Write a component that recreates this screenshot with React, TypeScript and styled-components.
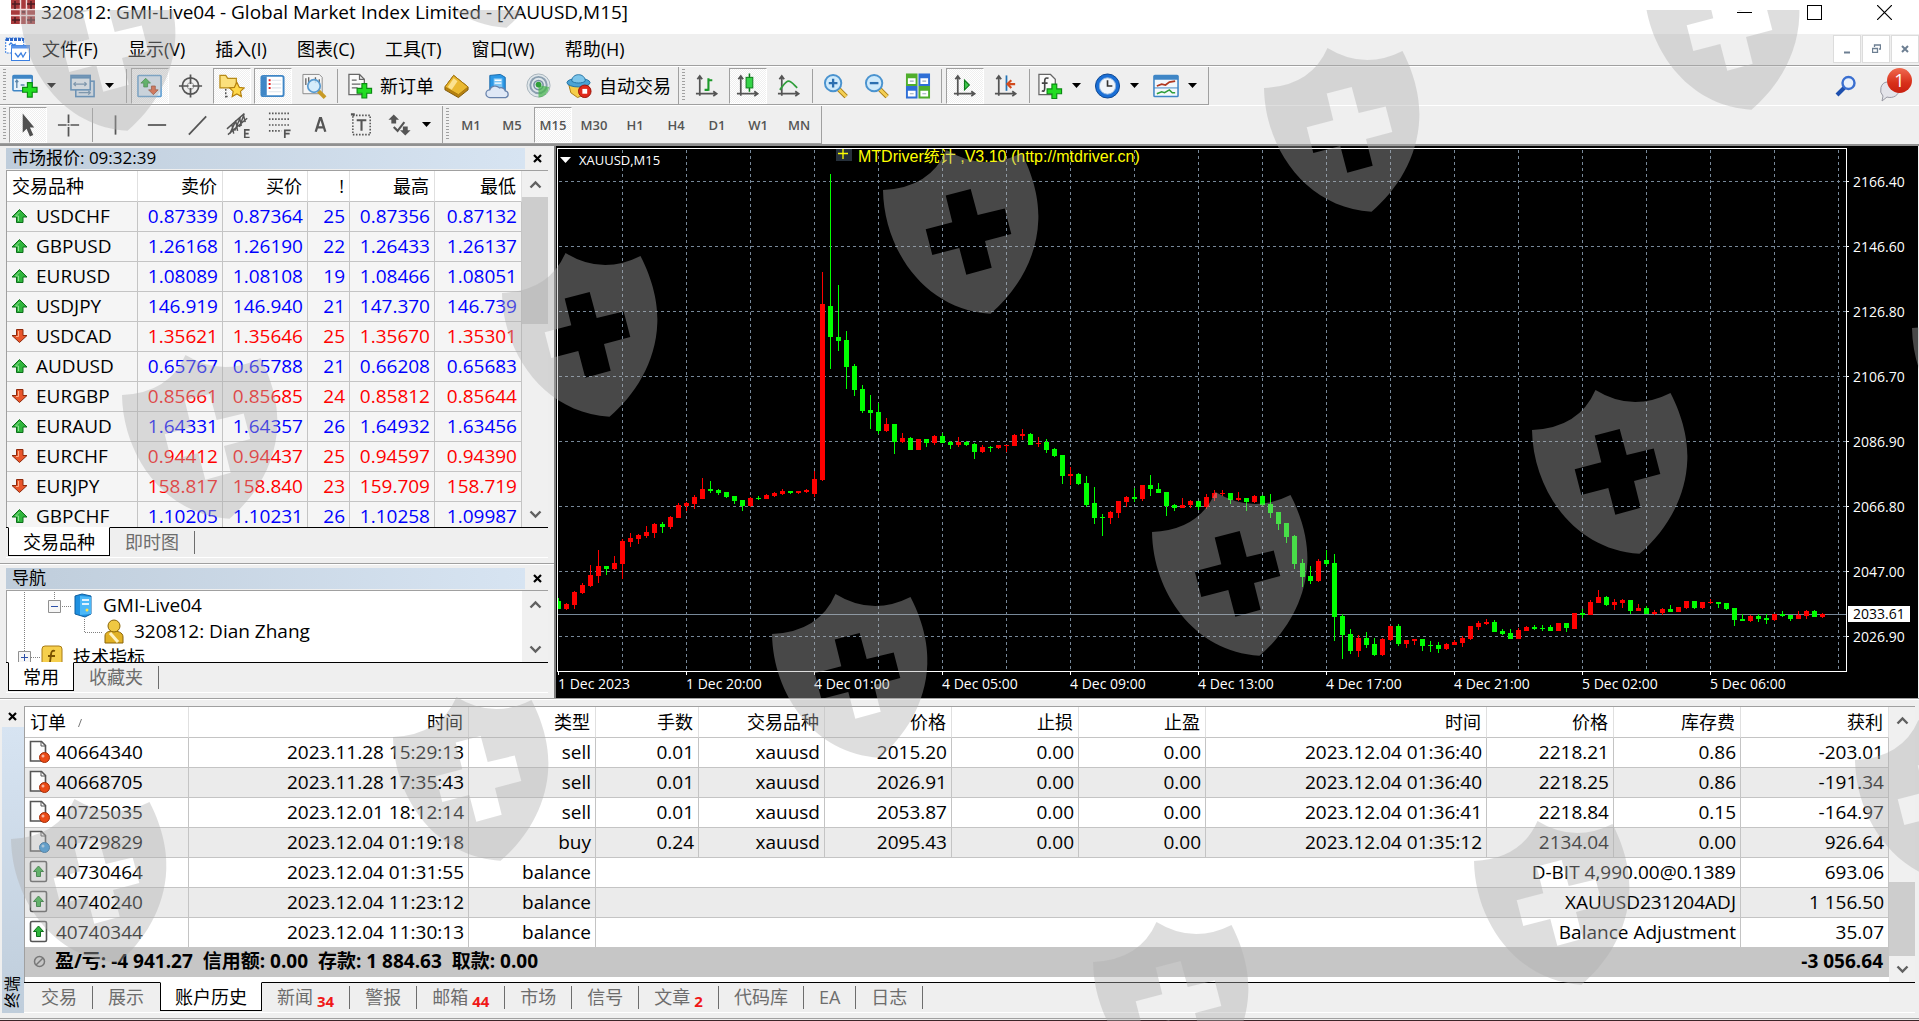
import React from 'react';
import styled, { createGlobalStyle, css } from 'styled-components';

const GlobalStyle = createGlobalStyle`
  *, *::before, *::after { box-sizing: border-box; }
  body { margin: 0; background: #efefef; }
  button { font: inherit; color: inherit; border: 0; background: none; padding: 0; margin: 0; }
  svg { display: block; flex: none; }
`;

const SANS = `"Open Sans", "Noto Sans CJK SC", sans-serif`;

const App_ = styled.div`
  position: relative;
  display: flex;
  flex-direction: column;
  min-height: 100vh;
  overflow: hidden;
  background: #efefef;
  color: #000;
  font-family: ${SANS};
  font-size: 18px;
`;

/* ---------- title and menu ---------- */

const TitleBar = styled.header`
  display: flex;
  align-items: center;
  height: 34px;
  padding: 0 0 10px 11px;
  gap: 6px;
  background: #fff;
  line-height: 24px;
`;
const TitleText = styled.h1`
  flex: 1;
  margin: 0;
  font-size: 19px;
  font-weight: 400;
  white-space: nowrap;
`;
const WindowButton = styled.button`
  display: flex;
  align-items: center;
  justify-content: center;
  width: 70px;
  height: 24px;
`;
const WindowButtons = styled.div`
  display: flex;
`;
const MenuBar = styled.nav`
  display: flex;
  align-items: center;
  height: 32px;
  padding: 0 0 2px 5px;
  border-bottom: 1px solid #a0a0a0;
`;
const MenuItems = styled.div`
  display: flex;
  flex: 1;
  margin-left: -2px;
`;
const MenuItem = styled.button`
  padding: 0 16px 0 14px;
  line-height: 28px;
  white-space: nowrap;
`;
const MdiButton = styled.button`
  display: flex;
  align-items: center;
  justify-content: center;
  width: 28px;
  height: 28px;
  margin-left: 1px;
  background: #fff;
  border: 1px solid #dcdcdc;
`;

/* ---------- tool bars ---------- */

const ToolRow = styled.div`
  display: flex;
  height: 39px;
  border-top: 1px solid #fff;
`;
const ToolGroup = styled.div<{ $end?: number }>`
  display: flex;
  align-items: center;
  gap: 3px;
  padding: 0 ${(p) => p.$end ?? 3}px 0 3px;
  border-right: 1px solid #a0a0a0;
  border-bottom: 1px solid #a0a0a0;
`;
const Grip = styled.span`
  width: 3px;
  height: 33px;
  background: repeating-linear-gradient(#a0a0a0 0 1px, transparent 1px 3px);
`;
const Divider = styled.span`
  width: 1px;
  height: 34px;
  margin: 0 1px;
  background: #a0a0a0;
`;
const ToolButton = styled.button<{ $on?: boolean; $drop?: boolean }>`
  display: flex;
  align-items: center;
  justify-content: ${(p) => (p.$drop ? 'flex-start' : 'center')};
  flex: none;
  gap: 9px;
  width: ${(p) => (p.$drop ? 55 : 38)}px;
  height: 36px;
  padding-left: ${(p) => (p.$drop ? 2 : 0)}px;
  border: 1px solid transparent;
  ${(p) =>
    p.$on &&
    css`
      background: repeating-conic-gradient(#fff 0 25%, #efefef 0 50%) 0 0 / 2px 2px;
      border-color: #a0a0a0 #fff #fff #a0a0a0;
    `}
`;
const WideTool = styled.button`
  display: flex;
  align-items: center;
  gap: 7px;
  padding: 0 1px 0 5px;
  white-space: nowrap;
  line-height: 30px;
`;
const PeriodButton = styled(ToolButton)`
  color: #555;
  font-size: 13px;
  font-weight: 600;
`;
const Spacer = styled.div`
  flex: 1;
`;
const RightTools = styled.div`
  display: flex;
  align-items: center;
  gap: 20px;
  padding-right: 6px;
`;
const AlertButton = styled.button`
  position: relative;
  width: 36px;
  height: 36px;
`;
const AlertCount = styled.span`
  position: absolute;
  right: 1px;
  top: 0;
  width: 25px;
  height: 25px;
  border-radius: 50%;
  background: linear-gradient(#ef6a50, #d8301a 60%, #c82010);
  color: #fff;
  font-size: 18px;
  line-height: 24px;
  text-align: center;
`;

/* ---------- docked panels ---------- */

const Main = styled.main`
  display: flex;
  flex: 1;
  min-height: 552px;
  border-top: 2px solid #909090;
`;
const Dock = styled.aside`
  display: flex;
  flex-direction: column;
  flex: none;
  width: 554px;
  padding: 0 6px 5px;
`;
const Panel = styled.section<{ $grow?: boolean }>`
  display: flex;
  flex-direction: column;
  flex: ${(p) => (p.$grow ? '1 1 0' : 'none')};
  min-height: 0;
  padding-top: 2px;
`;
const DockRule = styled.div`
  height: 3px;
  margin: 5px -6px 0;
  border-top: 1px solid #a0a0a0;
  box-shadow: inset 0 1px 0 #fff;
`;
const PanelHead = styled.header`
  display: flex;
  align-items: center;
  flex: none;
  height: 21px;
  margin-bottom: 1px;
`;
const PanelTitle = styled.h2`
  flex: 1;
  height: 21px;
  margin: 0;
  padding-left: 6px;
  background: linear-gradient(90deg, #bfcddb, #d7e4f2);
  font-size: 17px;
  font-weight: 400;
  line-height: 19px;
`;
const CloseButton = styled.button`
  display: flex;
  align-items: center;
  justify-content: center;
  width: 23px;
  height: 21px;
  padding-left: 2px;
`;
const PanelBody = styled.div<{ $h?: number }>`
  display: flex;
  position: relative;
  flex: ${(p) => (p.$h ? 'none' : '1 1 0')};
  height: ${(p) => (p.$h ? p.$h + 'px' : 'auto')};
  min-height: 0;
  overflow: hidden;
  border-top: 1px solid #a0a0a0;
  border-left: 1px solid #a0a0a0;
  background: #fff;
`;
const ScrollBar = styled.div<{ $w: number }>`
  display: flex;
  flex-direction: column;
  align-items: center;
  flex: none;
  width: ${(p) => p.$w}px;
  background: #f0f0f0;
`;
const ScrollStep = styled.button`
  display: flex;
  align-items: center;
  justify-content: center;
  width: 100%;
  height: 26px;
`;
const Thumb = styled.div<{ $h: number }>`
  width: 100%;
  height: ${(p) => p.$h}px;
  background: #cdcdcd;
`;
const Tabs = styled.div`
  display: flex;
  flex: none;
  height: 31px;
  padding-left: 2px;
  border-top: 1px solid #000;
  border-bottom: 1px solid #fff;
`;
const Tab = styled.button<{ $active?: boolean; $bare?: boolean }>`
  position: relative;
  display: flex;
  align-items: center;
  padding: 0 16px 0 15px;
  height: 28px;
  color: #6d6d6d;
  font-size: 18px;
  line-height: 26px;
  white-space: nowrap;
  ${(p) =>
    p.$active
      ? css`
          color: #000;
          background: #fff;
          height: 29px;
          margin-top: -1px;
          padding: 0 14px;
          border: 1px solid #000;
          border-top-color: #fff;
        `
      : css`
          &::after {
            content: '';
            display: ${p.$bare ? 'none' : 'block'};
            position: absolute;
            right: 0;
            top: 3px;
            height: 23px;
            border-right: 1px solid #6d6d6d;
          }
        `}
`;
const TabCount = styled.b`
  align-self: flex-end;
  padding-left: 4px;
  color: #f01818;
  font-size: 15px;
  line-height: 20px;
`;

/* ---------- tables ---------- */

const Table = styled.table`
  flex: 1;
  align-self: flex-start;
  min-width: 0;
  border-collapse: separate;
  border-spacing: 0;
  table-layout: fixed;
  white-space: nowrap;
`;
const Th = styled.th<{ $left?: boolean }>`
  height: 31px;
  padding: 0 5px;
  text-align: ${(p) => (p.$left ? 'left' : 'right')};
  font-size: 18px;
  font-weight: 400;
  line-height: 28px;
  border-right: 1px solid #e0e0e0;
  border-bottom: 1px solid #c4c4c4;
`;
const Td = styled.td<{ $left?: boolean }>`
  height: 30px;
  padding: 0 4px 2px;
  text-align: ${(p) => (p.$left ? 'left' : 'right')};
  font-size: 19px;
  line-height: 26px;
  border-right: 1px solid #c4c4c4;
  border-bottom: 1px solid #c4c4c4;
`;
const QuoteRow = styled.tr<{ $up: boolean }>`
  background: #f5f5f5;
  color: ${(p) => (p.$up ? '#0000ff' : '#ff0000')};
`;
const OrderRow = styled.tr`
  background: #fff;
  &:nth-child(even) { background: #ebebeb; }
  &:last-child td { border-bottom: 0; height: 29px; }
`;
const Label = styled.span<{ $gap: number }>`
  display: flex;
  align-items: center;
  gap: ${(p) => p.$gap}px;
  color: #000;
`;

/* ---------- navigator ---------- */

const Tree = styled.ul`
  flex: 1;
  margin: 0;
  padding: 1px 0 0;
  list-style: none;
  position: relative;
`;
const TreeItem = styled.li<{ $indent: number }>`
  display: flex;
  align-items: center;
  gap: 10px;
  height: 26px;
  padding-left: ${(p) => p.$indent}px;
  font-size: 19px;
  line-height: 24px;
  white-space: nowrap;
`;
const TreeFolder = styled(TreeItem)`
  font-size: 18px;
`;
const TreeLines = styled.svg`
  position: absolute;
  left: 0;
  top: 0;
`;

/* ---------- chart ---------- */

const Chart = styled.section`
  display: grid;
  grid-template-columns: 1fr 71px;
  grid-template-rows: 1fr 26px;
  flex: 1;
  min-width: 0;
  margin-right: 1px;
  padding: 2px 0 0 1px;
  border-left: 2px solid #808080;
  background: #000;
  color: #fff;
  font-size: 14px;
`;
const Plot = styled.div`
  position: relative;
  min-width: 0;
  overflow: hidden;
  border: 1px solid #fff;
`;
const PlotSvg = styled.svg`
  position: absolute;
  inset: 0;
  width: 100%;
  height: 100%;
`;
const PriceScale = styled.div`
  position: relative;
  display: flex;
  flex-direction: column;
  padding-top: 1px;
`;
const Price = styled.span`
  display: flex;
  align-items: center;
  gap: 4px;
  height: 65px;
  &::before {
    content: '';
    width: 2px;
    height: 1px;
    background: #fff;
  }
`;
const PriceTag = styled.span`
  position: absolute;
  left: 1px;
  top: 458px;
  width: 62px;
  height: 16px;
  padding-left: 5px;
  background: #fff;
  color: #000;
  line-height: 16px;
`;
const TimeScale = styled.div`
  display: flex;
  overflow: hidden;
  padding-left: 1px;
`;
const Time = styled.span`
  flex: none;
  width: 128px;
  line-height: 18px;
  white-space: nowrap;
  &::before {
    content: '';
    display: block;
    width: 1px;
    height: 3px;
    background: #fff;
  }
`;
const Symbol = styled.div`
  position: absolute;
  left: 2px;
  top: 1px;
  display: flex;
  align-items: center;
  gap: 8px;
  font-size: 13px;
  line-height: 20px;
`;
const Comment = styled.div`
  position: absolute;
  left: 278px;
  top: 0;
  display: flex;
  gap: 6px;
  color: #ffff00;
  font-family: "Liberation Sans", "Noto Sans CJK SC", sans-serif;
  font-size: 16px;
  line-height: 16px;
  white-space: nowrap;
`;

/* ---------- terminal ---------- */

const Terminal = styled.section`
  display: flex;
  padding: 7px 4px 0 2px;
  border-top: 1px solid #a0a0a0;
  box-shadow: inset 0 1px 0 #fff;
`;
const TerminalRail = styled.div`
  display: flex;
  flex-direction: column;
  flex: none;
  width: 22px;
`;
const RailTitle = styled.h2`
  flex: 1;
  margin: 0;
  padding-top: 5px;
  background: linear-gradient(#bfcddb, #d7e4f2);
  font-size: 16px;
  font-weight: 400;
  line-height: 20px;
  writing-mode: vertical-rl;
  text-orientation: sideways;
  transform: rotate(180deg);
`;
const RailClose = styled(CloseButton)`
  width: 20px;
  padding-left: 0;
`;
const TerminalBody = styled.div`
  display: flex;
  flex-direction: column;
  flex: 1;
  min-width: 0;
`;
const History = styled.div`
  display: flex;
  background: #fff;
  border-top: 1px solid #a0a0a0;
  border-left: 1px solid #a0a0a0;
`;
const HistoryMain = styled.div`
  display: flex;
  flex-direction: column;
  flex: 1;
  min-width: 0;
  padding-bottom: 5px;
`;
const HistoryTable = styled(Table)`
  width: 100%;
`;
const Summary = styled.div`
  display: flex;
  align-items: center;
  height: 30px;
  padding: 0 6px 2px 8px;
  gap: 9px;
  background: #c6c6c6;
  font-size: 19px;
  font-weight: 700;
  line-height: 28px;
  white-space: pre;
`;
const BottomEdge = styled.footer`
  height: 8px;
  border-bottom: 1px solid #3a2428;
  box-shadow: inset 0 -1px 0 #efefef, inset 0 -2px 0 #a0a0a0;
`;

const Watermarks = styled.svg`
  position: absolute;
  left: 0;
  top: 10px;
  width: 100%;
  height: calc(100% - 10px);
  pointer-events: none;
`;

/* ---------- icons ---------- */

const Drop = () => (
  <svg width="9" height="6" viewBox="0 0 9 6"><path d="M0 0h9L4.500 5z" fill="#000" /></svg>
);
const CloseMark = () => (
  <svg width="9" height="9" viewBox="0 0 9 9"><path d="M1 1l7 7M8 1L1 8" stroke="#000" strokeWidth="2.200" /></svg>
);
const Chevron = ({ down }: { down?: boolean }) => (
  <svg width="13" height="9" viewBox="0 0 13 9">
    <path d={down ? 'M1.500 1.500l5 5 5-5' : 'M1.500 7.500l5-5 5 5'} stroke="#606060" strokeWidth="2.400" fill="none" />
  </svg>
);
const TrendArrow = ({ up, size = 17 }: { up: boolean; size?: number }) => (
  <svg width={size} height={size} viewBox="0 0 17 17">
    <path
      d={up ? 'M8.500 2.500L16 10H12V15.500H5.500V10H1z' : 'M8.500 15.500L16 8.500H12V2.500H5.500V8.500H1z'}
      fill={up ? '#2fb53c' : '#e8552a'}
      stroke={up ? '#0d6e1a' : '#8e2a0c'}
      strokeLinejoin="round"
    />
    <path d={up ? 'M8.500 5L4.500 9H7.500V14' : 'M7.500 4V9.500H5'} stroke={up ? '#8be08f' : '#ffb08c'} fill="none" />
  </svg>
);
const Plus = ({ x, y }: { x: number; y: number }) => (
  <path
    transform={`translate(${x} ${y})`}
    d="M5 0h5v5h5v5h-5v5h-5v-5h-5v-5h5z"
    fill="#22dd22"
    stroke="#0a8a12"
    strokeWidth="1.200"
  />
);
const Axes = () => (
  <path d="M6 3v20M2 21h21M3.500 6L6 2.500 8.500 6M20 18.500l3.500 2.500-3.500 2.500" stroke="#555" strokeWidth="1.800" fill="none" />
);
const Lens = ({ minus }: { minus?: boolean }) => (
  <>
    <path d="M16 16l8 8" stroke="#a87b14" strokeWidth="5" />
    <path d="M16 16l8 8" stroke="#f4cf55" strokeWidth="3" />
    <circle cx="10.500" cy="10" r="8.500" fill="#cfeafb" stroke="#4a93cf" strokeWidth="2" />
    <path d={minus ? 'M6 10h9' : 'M6 10h9M10.500 5.500v9'} stroke="#2b6fb0" strokeWidth="2.400" />
  </>
);

const ICONS: Record<string, React.ReactNode> = {
  newChart: (
    <>
      <rect x="1" y="2" width="20" height="16" rx="1" fill="#e9f3fb" stroke="#3f86c6" strokeWidth="1.600" />
      <path d="M1 4h20" stroke="#3f86c6" strokeWidth="3" />
      <path d="M5 7v8M3.500 9L5 7l1.500 2M9 12h4" stroke="#5d86aa" strokeWidth="1.400" fill="none" />
      <Plus x={11} y={9.5} />
    </>
  ),
  profiles: (
    <>
      <rect x="6" y="8" width="19" height="16" fill="#dbe9f6" stroke="#3f7fb8" strokeWidth="1.600" />
      <rect x="1" y="2" width="20" height="15" fill="#e9f3fb" stroke="#3f7fb8" strokeWidth="1.600" />
      <path d="M1 4h20" stroke="#3f7fb8" strokeWidth="2.600" />
      <path d="M4 11h13M6 9l-2 2 2 2M15 9l2 2-2 2M9 20h12M19 18l2 2-2 2" stroke="#5d86aa" strokeWidth="1.300" fill="none" />
    </>
  ),
  market: (
    <>
      <rect x="1" y="2" width="24" height="22" rx="1" fill="#dcebf8" stroke="#5a9bd0" strokeWidth="1.600" />
      <path d="M9 5l5 5h-3v4h-4v-4h-3z" fill="#2fb53c" stroke="#13731e" strokeWidth=".8" />
      <path d="M17 22l5-5h-3v-4h-4v4h-3z" fill="#e8552a" stroke="#8e2a0c" strokeWidth=".8" />
    </>
  ),
  crosshair: (
    <>
      <circle cx="13" cy="13" r="8.500" fill="none" stroke="#555" strokeWidth="1.800" />
      <circle cx="13" cy="13" r="3.500" fill="none" stroke="#999" strokeWidth="1" />
      <path d="M13 1v10M13 15v10M1 13h10M15 13h10" stroke="#555" strokeWidth="1.800" />
    </>
  ),
  navigator: (
    <>
      <path d="M1 2h6l2 3h9v10H1z" fill="#fbe07c" stroke="#b78a16" strokeWidth="1.300" />
      <path d="M7 16v9M7 24h3" stroke="#555" strokeWidth="1.500" strokeDasharray="2 1.500" />
      <path d="M18.500 9l2.600 5.400 5 .6-3.800 3.600 1 5.400-4.800-2.800-4.800 2.800 1-5.400L11 15l5-.6z" fill="#ffd84a" stroke="#b5810e" strokeWidth="1.200" />
    </>
  ),
  terminal: (
    <>
      <rect x="1.500" y="2.500" width="23" height="21" rx="2" fill="#fff" stroke="#3f86c6" strokeWidth="2" />
      <rect x="2" y="3" width="5" height="20" fill="#3f86c6" />
      <path d="M9 7h2M9 11h2M9 15h2" stroke="#e02020" strokeWidth="2" />
      <path d="M12 7h10M12 11h10M12 15h10M9 19h13" stroke="#dde3ea" strokeWidth="1.200" />
    </>
  ),
  tester: (
    <>
      <path d="M2 1h17l3 3v17H2z" fill="#f5f5f5" stroke="#8a8a8a" />
      <path d="M5 5v7M8 4v8M15 4v6M19 6v6" stroke="#666" strokeWidth="1.400" />
      <path d="M18 18l7 7" stroke="#c89a24" strokeWidth="4" />
      <circle cx="13.500" cy="13" r="6.500" fill="#cfeafb" fillOpacity=".85" stroke="#5a9bd0" strokeWidth="1.800" />
    </>
  ),
  newOrder: (
    <>
      <path d="M2 1h11l5 5v16H2z" fill="#fafafa" stroke="#666" strokeWidth="1.300" />
      <path d="M13 1v5h5M5 7h5M5 11h9M5 15h6" stroke="#666" strokeWidth="1.300" fill="none" />
      <Plus x={10.5} y={10.5} />
    </>
  ),
  gold: (
    <>
      <path d="M1 14L10 2l15 12v3l-10 8L1 17z" fill="#b8820f" stroke="#7d5606" />
      <path d="M1 14L10 2l15 12-10 8z" fill="#eab932" stroke="#a8770e" />
      <path d="M4 14l6-9 4 3-6 9z" fill="#fbe291" />
    </>
  ),
  cloud: (
    <>
      <path d="M5 2l11-1 5 3v14H5z" fill="#2c98e6" stroke="#1468ac" />
      <path d="M9 5h9v10H9z" fill="#7fc6f5" />
      <path d="M10 7h7M10 10h7" stroke="#fff" strokeWidth="1.500" />
      <path d="M5 25a4 4 0 010-8 6 6 0 0110-2 5 5 0 016 3 3.600 3.600 0 01.5 7z" fill="#dfe8f6" stroke="#6782ac" strokeWidth="1.300" />
    </>
  ),
  signal: (
    <>
      <circle cx="13" cy="12.500" r="12" fill="#dfe6ea" stroke="#a5b2ba" />
      <circle cx="13" cy="12" r="8.500" fill="none" stroke="#8b9fb0" strokeWidth="2" />
      <circle cx="13" cy="12" r="4.800" fill="none" stroke="#7790a4" strokeWidth="1.600" />
      <path d="M13 12v13a12 12 0 0011-11z" fill="#45b54a" opacity=".7" />
      <circle cx="13" cy="11.500" r="3" fill="#2f9e3a" />
    </>
  ),
  auto: (
    <>
      <path d="M3 12h20l-4 10-7 3-7-5z" fill="#f6cd48" stroke="#a87b14" />
      <ellipse cx="13" cy="9.500" rx="12" ry="4.500" fill="#4ba3d4" stroke="#2272a4" />
      <path d="M6 8c0-9 14-9 14 0-3 2.500-11 2.500-14 0z" fill="#7cc5ea" stroke="#2272a4" />
      <circle cx="19.500" cy="18.500" r="6.500" fill="#e0291b" stroke="#991308" />
      <rect x="17" y="16" width="5" height="5" fill="#fff" />
    </>
  ),
  bars: (<><Axes /><path d="M15 5v13M15 7h4M11 17h4" stroke="#1d9a2a" strokeWidth="2.200" fill="none" /></>),
  candles: (<><Axes /><path d="M15 0v19" stroke="#0c7a1a" strokeWidth="1.600" /><rect x="11.500" y="4" width="7" height="11" fill="#35d448" stroke="#0c7a1a" /></>),
  line: (<><Axes /><path d="M4 17C8 12 10 8 13 8s5 3 9 7" stroke="#2f9e3a" strokeWidth="1.800" fill="none" /></>),
  zoomIn: <Lens />,
  zoomOut: <Lens minus />,
  tile: (
    <>
      <rect x="1" y="0" width="12" height="13" fill="#4fae2c" /><rect x="14" y="0" width="12" height="13" fill="#2f6fd6" />
      <rect x="1" y="13" width="12" height="13" fill="#2f6fd6" /><rect x="14" y="13" width="12" height="13" fill="#4fae2c" />
      <path d="M3 5h8v6H3zM16 5h8v6h-8zM3 18h8v6H3zM16 18h8v6h-8z" fill="#fff" />
      <path d="M5 8h4M18 8h4M5 21h4M18 21h4" stroke="#9ab" strokeWidth="1.200" />
    </>
  ),
  scroll: (<><Axes /><path d="M13 7v10l5-5z" fill="#3fc94c" stroke="#0c7a1a" strokeWidth="1.200" /></>),
  shift: (<><Axes /><path d="M14 2v16" stroke="#2272b4" strokeWidth="1.800" /><path d="M23 11h-7M19 7l-4 4 4 4" stroke="#d24a1c" strokeWidth="2.200" fill="none" /></>),
  indicator: (
    <>
      <path d="M2 1h12l5 5v16H2z" fill="#fafafa" stroke="#666" strokeWidth="1.300" />
      <path d="M12 5c-3-1-4 0-4 3v7c0 3-1 4-3 3M5 10h6" stroke="#444" strokeWidth="1.700" fill="none" />
      <Plus x={10.5} y={11} />
    </>
  ),
  clock: (
    <>
      <circle cx="13" cy="13" r="12.500" fill="#1a6fd6" stroke="#0c458f" />
      <circle cx="13" cy="13" r="8.500" fill="#f0f5fa" stroke="#8fb4de" />
      <path d="M13 7v6h5" stroke="#333" strokeWidth="1.700" fill="none" />
    </>
  ),
  template: (
    <>
      <rect x="1" y="2" width="25" height="22" rx="1" fill="#f3f8fc" stroke="#3f86c6" strokeWidth="1.600" />
      <path d="M1 4.500h25" stroke="#3f86c6" strokeWidth="4" />
      <path d="M4 13l5-2 4 1 4-3 6-1" stroke="#b03820" strokeWidth="1.800" fill="none" />
      <path d="M1 15h25" stroke="#3f86c6" />
      <path d="M4 21l5-2 3 1 5-3 3 3h3" stroke="#2f9e3a" strokeWidth="1.600" fill="none" />
    </>
  ),
  pointer: <path d="M8 1v20l4-4 3.500 8 3.500-1.500-3.500-8H20z" fill="#505050" />,
  cross: <path d="M13 2v9M13 15v10M2 13h9M15 13h9M12 13h2" stroke="#555" strokeWidth="1.800" />,
  vline: <path d="M13 3v20" stroke="#555" strokeWidth="1.800" />,
  hline: <path d="M4 13h19" stroke="#555" strokeWidth="1.800" />,
  trend: <path d="M4 23L22 4" stroke="#555" strokeWidth="1.800" />,
  channel: (
    <>
      <path d="M1 17L19 1M2 23L22 6M6 12l2 10M10 8l2 11M14 5l2 9M18 2l2 8M4 22L10 9M9 19L15 5M14 15L19 1" stroke="#555" strokeWidth="1.500" />
      <path d="M24.500 18h-5v8h5M19.500 22h4" stroke="#555" strokeWidth="1.700" fill="none" />
    </>
  ),
  fibo: (
    <>
      <path d="M2 1h22M2 7h22M2 13h22M2 19h13" stroke="#555" strokeWidth="1.800" strokeDasharray="1.600 1.600" />
      <path d="M24.500 18.500h-6v8M18.500 22h5" stroke="#555" strokeWidth="1.800" fill="none" />
    </>
  ),
  textTool: <path d="M8 20L12.500 6h1L18 20M9.500 15.500h7" stroke="#555" strokeWidth="2.400" fill="none" />,
  labelTool: (
    <>
      <rect x="4" y="3" width="18" height="20" fill="none" stroke="#555" strokeWidth="1.600" strokeDasharray="1.600 1.600" />
      <path d="M8 8h10M13 8v11M2 2h4" stroke="#555" strokeWidth="2.200" />
    </>
  ),
  arrows: (
    <>
      <path d="M7 2l5.500 5.500H9.500v4h-5v-4H1.500zM19 24l5.500-5.500h-3v-4h-5v4h-3z" fill="#555" />
      <path d="M7 15l4 4 7-9" stroke="#555" strokeWidth="2.200" fill="none" />
    </>
  ),
};

const Icon = ({ name }: { name: string }) => (
  <svg width="26" height="26" viewBox="0 0 27 26" aria-hidden="true">{ICONS[name]}</svg>
);

const DocIcon = ({ kind }: { kind: string }) =>
  kind === 'balance' ? (
    <svg width="21" height="23" viewBox="0 0 21 23">
      <rect x="1.500" y="1.500" width="16" height="20" rx="1.500" fill="#fdfdfd" stroke="#555" strokeWidth="1.600" />
      <path d="M9.500 6l5 5.500h-3v5h-4v-5h-3z" fill="#2fb53c" stroke="#0d6e1a" />
    </svg>
  ) : (
    <svg width="21" height="23" viewBox="0 0 21 23">
      <path d="M1.500 1.500h11l4 4v15.500h-15z" fill="#fdfdfd" stroke="#555" strokeWidth="1.600" />
      <path d="M12 1.500v4.500h4.500" fill="none" stroke="#555" />
      <circle cx="15.500" cy="17.500" r="5" fill={kind === 'sell' ? '#ea4a16' : '#2f95dd'} stroke={kind === 'sell' ? '#a32c06' : '#19649c'} />
      <circle cx="14" cy="16" r="1.500" fill="#fff" opacity=".6" />
    </svg>
  );

/* ---------- data ---------- */

const MENU = ['文件(F)', '显示(V)', '插入(I)', '图表(C)', '工具(T)', '窗口(W)', '帮助(H)'];
const PERIODS = ['M1', 'M5', 'M15', 'M30', 'H1', 'H4', 'D1', 'W1', 'MN'];

const QUOTES: [string, boolean, ...string[]][] = [
  ['USDCHF', true, '0.87339', '0.87364', '25', '0.87356', '0.87132'],
  ['GBPUSD', true, '1.26168', '1.26190', '22', '1.26433', '1.26137'],
  ['EURUSD', true, '1.08089', '1.08108', '19', '1.08466', '1.08051'],
  ['USDJPY', true, '146.919', '146.940', '21', '147.370', '146.739'],
  ['USDCAD', false, '1.35621', '1.35646', '25', '1.35670', '1.35301'],
  ['AUDUSD', true, '0.65767', '0.65788', '21', '0.66208', '0.65683'],
  ['EURGBP', false, '0.85661', '0.85685', '24', '0.85812', '0.85644'],
  ['EURAUD', true, '1.64331', '1.64357', '26', '1.64932', '1.63456'],
  ['EURCHF', false, '0.94412', '0.94437', '25', '0.94597', '0.94390'],
  ['EURJPY', false, '158.817', '158.840', '23', '159.709', '158.719'],
  ['GBPCHF', true, '1.10205', '1.10231', '26', '1.10258', '1.09987'],
];

const ORDERS: string[][] = [
  ['40664340', '2023.11.28 15:29:13', 'sell', '0.01', 'xauusd', '2015.20', '0.00', '0.00', '2023.12.04 01:36:40', '2218.21', '0.86', '-203.01'],
  ['40668705', '2023.11.28 17:35:43', 'sell', '0.01', 'xauusd', '2026.91', '0.00', '0.00', '2023.12.04 01:36:40', '2218.25', '0.86', '-191.34'],
  ['40725035', '2023.12.01 18:12:14', 'sell', '0.01', 'xauusd', '2053.87', '0.00', '0.00', '2023.12.04 01:36:41', '2218.84', '0.15', '-164.97'],
  ['40729829', '2023.12.04 01:19:18', 'buy', '0.24', 'xauusd', '2095.43', '0.00', '0.00', '2023.12.04 01:35:12', '2134.04', '0.00', '926.64'],
  ['40730464', '2023.12.04 01:31:55', 'balance', 'D-BIT 4,990.00@0.1389', '693.06'],
  ['40740240', '2023.12.04 11:23:12', 'balance', 'XAUUSD231204ADJ', '1 156.50'],
  ['40740344', '2023.12.04 11:30:13', 'balance', 'Balance Adjustment', '35.07'],
];

const PRICES = ['2166.40', '2146.60', '2126.80', '2106.70', '2086.90', '2066.80', '2047.00', '2026.90'];
const TIMES = ['1 Dec 2023', '1 Dec 20:00', '4 Dec 01:00', '4 Dec 05:00', '4 Dec 09:00', '4 Dec 13:00', '4 Dec 17:00', '4 Dec 21:00', '5 Dec 02:00', '5 Dec 06:00'];

// One bar per entry: direction, wick top, body top, body bottom, wick bottom.
const BARS = `
g458,461,469,469 r463,464,469,470 r451,452,465,469 r443,445,453,454 r425,435,446,447 r410,426,436,443 g426,426,429,435 r416,423,429,430
r399,401,424,439 r393,398,402,407 r394,395,399,404 r386,392,396,398 r383,384,393,398 g382,384,387,393 r376,377,387,389 r363,365,378,378
r362,363,366,371 r355,357,364,369 r338,349,359,359 g341,349,351,353 g349,350,353,355 g352,352,357,358 g356,356,361,364 g360,360,366,371
r357,358,366,367 g356,358,359,360 r354,355,359,359 r352,353,356,357 r349,351,354,355 g351,351,353,354 r351,351,353,354 r349,350,352,353
r331,339,354,357 r132,164,340,341 g34,166,197,229 g145,197,201,211 g191,200,227,249 g224,226,250,256 g245,249,271,273 g255,270,273,289
g263,272,291,294 r278,284,291,292 g284,284,302,314 r293,298,302,303 g297,298,310,310 r299,299,310,310 g299,299,303,307 r295,296,303,305
g293,296,303,303 g301,302,305,309 r297,302,305,307 g301,302,305,306 g303,304,312,319 r305,307,312,313 g306,307,308,312 r305,305,308,309
r305,305,306,312 r294,295,306,306 r289,294,296,300 g293,294,305,305 r297,303,304,307 g299,302,310,313 g308,309,316,317 g315,315,336,344
r327,334,336,345 g333,334,344,345 g336,343,365,367 g347,363,378,384 g374,377,378,396 r371,372,378,384 r361,361,373,378 r356,357,362,367
g348,357,359,362 r345,345,359,361 g335,345,349,356 g343,349,353,353 g352,352,366,376 g364,365,368,371 r358,365,368,368 r360,361,365,368
g361,361,367,370 r354,357,367,369 r350,353,358,361 r350,353,354,356 g353,353,360,364 r352,358,360,361 g358,358,362,371 r355,356,362,363
g355,356,365,366 g354,364,373,378 g372,372,384,390 g383,383,397,403 g395,396,424,429 g419,423,437,447 g426,436,441,444 r419,421,441,442
g410,420,424,426 g414,423,477,501 g474,476,495,519 g489,494,511,514 r495,498,511,517 g492,498,505,508 g498,504,515,516 r498,499,515,516
r486,486,500,501 g484,486,504,506 r500,500,504,508 r499,499,501,505 g499,499,506,511 g501,505,506,512 g502,505,509,513 r503,504,509,510
r500,502,505,505 r496,498,503,507 r486,486,499,500 r481,483,487,490 r479,482,484,485 g480,482,492,492 g489,491,494,495 g489,493,499,499
r488,490,499,499 r486,487,491,491 g485,487,489,490 g485,488,489,491 g485,487,491,491 r483,483,491,491 g483,483,488,492 r473,473,489,489
g469,473,475,478 r460,462,475,475 r450,457,463,463 g456,457,465,466 r459,462,465,470 r459,460,463,468 g460,460,471,474 r464,468,471,471
g466,468,474,474 r470,472,474,475 r468,469,473,475 g465,469,472,472 r467,467,472,472 r461,461,468,469 g461,461,468,469 r462,462,468,469
r459,462,463,464 g462,462,464,468 g463,463,469,470 g468,468,480,486 g474,479,481,481 r475,476,481,482 g474,476,479,482 g474,478,480,484
r474,474,480,481 g471,474,476,477 g475,475,479,481 r471,475,479,479 r470,471,476,479 g470,471,477,477 r473,474,477,478`
  .trim()
  .split(/\s+/)
  .map((bar) => ({ color: bar[0] === 'g' ? '#00ff00' : '#ff0000', y: bar.slice(1).split(',').map(Number) }));

const SHIELDS = [
  [20, -33], [399, -136], [1644, -54], [1264, 48], [883, 150], [502, 253], [122, 355], [1912, 288], [1532, 390],
  [1152, 492], [772, 594], [393, 697], [11, 799], [1855, 720], [1474, 821], [1093, 922],
];

const HISTORY_COLS = [164, 280, 127, 103, 126, 127, 127, 127, 281, 127, 127, 148];
const QUOTE_COLS = [131, 85, 85, 42, 85, 87];

/* ---------- parts ---------- */

const Tool = ({ name, label, on, drop }: { name: string; label: string; on?: boolean; drop?: boolean }) => (
  <ToolButton type="button" aria-label={label} $on={on} $drop={drop}>
    <Icon name={name} />
    {drop && <Drop />}
  </ToolButton>
);

const CandleChart = () => (
  <PlotSvg role="img" aria-label="XAUUSD M15">
    <g stroke="#778899" strokeDasharray="3 3" shapeRendering="crispEdges">
      {PRICES.map((p, i) => (
        <line key={p} x1="1" x2="100%" y1={32.5 + 65 * i} y2={32.5 + 65 * i} />
      ))}
      {Array.from({ length: 20 }, (_, i) => (
        <line key={i} x1={64.5 + 64 * i} x2={64.5 + 64 * i} y1="1" y2="100%" />
      ))}
    </g>
    <line x1="0" x2="100%" y1="465.500" y2="465.500" stroke="#778899" />
    <g transform="translate(0 -9)" shapeRendering="crispEdges">
      {BARS.map(({ color, y }, i) => (
        <g key={i} fill={color}>
          <rect x={8 * i} y={y[0]} width="1" height={y[3] - y[0]} />
          <rect x={8 * i - 2} y={y[1]} width="5" height={Math.max(1, y[2] - y[1])} />
        </g>
      ))}
    </g>
  </PlotSvg>
);

export default function App() {
  return (
    <App_>
      <GlobalStyle />
      <TitleBar>
        <svg width="24" height="24" viewBox="0 0 24 24">
          <rect width="24" height="24" fill="#a83a3c" />
          <path d="M0 9.500h24M0 15.500h24M9.500 0v24M15.500 0v24" stroke="#f3dcdc" strokeWidth="1.500" />
          <path d="M1 4h8M16 4h8M1 20h8M16 20h8M11 12h3M4 1v8M20 1v8M4 17v6M20 17v6" stroke="#4c1c22" strokeWidth="1.500" />
        </svg>
        <TitleText>320812: GMI-Live04 - Global Market Index Limited - [XAUUSD,M15]</TitleText>
        <WindowButtons>
          <WindowButton type="button" aria-label="最小化">
            <svg width="15" height="15"><path d="M0 7.500h15" stroke="#000" /></svg>
          </WindowButton>
          <WindowButton type="button" aria-label="最大化">
            <svg width="15" height="15"><rect x=".5" y=".5" width="14" height="14" fill="none" stroke="#000" /></svg>
          </WindowButton>
          <WindowButton type="button" aria-label="关闭">
            <svg width="15" height="15"><path d="M0 0l15 15M15 0L0 15" stroke="#000" strokeWidth="1.200" /></svg>
          </WindowButton>
        </WindowButtons>
      </TitleBar>
      <MenuBar>
        <svg width="25" height="25" viewBox="0 0 25 25">
          <rect x=".7" y="2" width="18" height="15" fill="#fff" stroke="#3b7fe0" strokeDasharray="2 1" />
          <path d="M1 3.500h18" stroke="#2c66c8" strokeWidth="3" strokeDasharray="3 1" />
          <rect x="6.500" y="9.500" width="18" height="15" fill="#fff" stroke="#3b7fe0" />
          <path d="M6 11h19" stroke="#5b95ea" strokeWidth="3" />
          <path d="M4 9l2-2 2 2 3-1M10 17l3 4 3-4 2 4 3-5" stroke="#3b7fe0" strokeWidth="1.300" fill="none" />
        </svg>
        <MenuItems>
          {MENU.map((m) => <MenuItem type="button" key={m}>{m}</MenuItem>)}
        </MenuItems>
        <MdiButton type="button" aria-label="最小化图表">
          <svg width="8" height="10"><path d="M1 8.500h6" stroke="#6d7f92" strokeWidth="2" /></svg>
        </MdiButton>
        <MdiButton type="button" aria-label="还原图表">
          <svg width="9" height="9"><path d="M2.500 3V1h6v4H7M2 1h7M.5 4.500h5v4h-5zM0 4.500h6" fill="none" stroke="#6d7f92" strokeWidth="1.300" /></svg>
        </MdiButton>
        <MdiButton type="button" aria-label="关闭图表">
          <svg width="8" height="8"><path d="M1 1l6 6M7 1L1 7" stroke="#6d7f92" strokeWidth="2" /></svg>
        </MdiButton>
      </MenuBar>

      <ToolRow>
        <ToolGroup $end={6}>
          <Grip />
          <Tool name="newChart" label="新图表" drop />
          <Tool name="profiles" label="配置" drop />
          <Divider />
          <Tool name="market" label="市场报价" on />
          <Tool name="crosshair" label="数据窗口" />
          <Tool name="navigator" label="导航" on />
          <Tool name="terminal" label="终端" on />
          <Tool name="tester" label="策略测试" />
          <Divider />
          <WideTool type="button"><Icon name="newOrder" />新订单</WideTool>
          <Tool name="gold" label="MetaEditor" />
          <Tool name="cloud" label="云" />
          <Tool name="signal" label="信号" />
          <WideTool type="button"><Icon name="auto" />自动交易</WideTool>
        </ToolGroup>
        <ToolGroup>
          <Grip />
          <Tool name="bars" label="柱状图" />
          <Tool name="candles" label="阴阳烛" on />
          <Tool name="line" label="折线图" />
          <Divider />
          <Tool name="zoomIn" label="放大" />
          <Tool name="zoomOut" label="缩小" />
          <Tool name="tile" label="平铺窗口" />
          <Divider />
          <Tool name="scroll" label="自动滚动" on />
          <Tool name="shift" label="图表平移" />
          <Divider />
          <Tool name="indicator" label="指标" drop />
          <Tool name="clock" label="周期" drop />
          <Tool name="template" label="模板" drop />
        </ToolGroup>
        <Spacer />
        <RightTools>
          <button type="button" aria-label="搜索">
            <svg width="22" height="22" viewBox="0 0 22 22">
              <path d="M2 20l8-8" stroke="#1d4fae" strokeWidth="4" />
              <circle cx="13.500" cy="8" r="6" fill="#e9f1fb" stroke="#3a6fd0" strokeWidth="2.400" />
            </svg>
          </button>
          <AlertButton type="button" aria-label="通知">
            <svg width="24" height="34" viewBox="0 0 24 34">
              <path d="M10 13a9 8 0 110 15l-5 4 1-5a7 8 0 014-14z" fill="#e4e4ea" stroke="#9a9aa4" />
            </svg>
            <AlertCount>1</AlertCount>
          </AlertButton>
        </RightTools>
      </ToolRow>
      <ToolRow>
        <ToolGroup>
          <Grip />
          <Tool name="pointer" label="光标" on />
          <Tool name="cross" label="十字线" />
          <Divider />
          <Tool name="vline" label="垂直线" />
          <Tool name="hline" label="水平线" />
          <Tool name="trend" label="趋势线" />
          <Tool name="channel" label="等距通道" />
          <Tool name="fibo" label="斐波那契" />
          <Tool name="textTool" label="文本" />
          <Tool name="labelTool" label="文本标签" />
          <Tool name="arrows" label="箭头" drop />
        </ToolGroup>
        <ToolGroup>
          <Grip />
          {PERIODS.map((p) => <PeriodButton type="button" key={p} $on={p === 'M15'}>{p}</PeriodButton>)}
        </ToolGroup>
      </ToolRow>

      <Main>
        <Dock>
          <Panel $grow>
            <PanelHead>
              <PanelTitle>市场报价: 09:32:39</PanelTitle>
              <CloseButton type="button" aria-label="关闭市场报价"><CloseMark /></CloseButton>
            </PanelHead>
            <PanelBody>
              <Table>
                <colgroup>{QUOTE_COLS.map((w, i) => <col key={i} style={{ width: w }} />)}</colgroup>
                <thead>
                  <tr>
                    {['交易品种', '卖价', '买价', '!', '最高', '最低'].map((h, i) => <Th key={h} $left={i === 0}>{h}</Th>)}
                  </tr>
                </thead>
                <tbody>
                  {QUOTES.map(([symbol, up, ...cells]) => (
                    <QuoteRow key={symbol} $up={up}>
                      <Td $left><Label $gap={8}><TrendArrow up={up} />{symbol}</Label></Td>
                      {cells.map((c, i) => <Td key={i}>{c}</Td>)}
                    </QuoteRow>
                  ))}
                </tbody>
              </Table>
              <ScrollBar $w={26}>
                <ScrollStep type="button" aria-label="向上"><Chevron /></ScrollStep>
                <Thumb $h={127} />
                <Spacer />
                <ScrollStep type="button" aria-label="向下"><Chevron down /></ScrollStep>
              </ScrollBar>
            </PanelBody>
            <Tabs>
              <Tab type="button" $active>交易品种</Tab>
              <Tab type="button">即时图</Tab>
            </Tabs>
          </Panel>
          <DockRule />
          <Panel>
            <PanelHead>
              <PanelTitle>导航</PanelTitle>
              <CloseButton type="button" aria-label="关闭导航"><CloseMark /></CloseButton>
            </PanelHead>
            <PanelBody $h={72}>
              <Tree>
                <TreeLines width="120" height="72" viewBox="0 0 120 72" aria-hidden="true">
                  <path d="M17.500 1v60M47.500 1v8M55 15.500h10M77.500 28v13.500h18M24 66.500h10" stroke="#808080" strokeDasharray="1 1" fill="none" />
                  <path d="M41.500 9.500h12v12h-12zM11.500 60.500h12v12h-12z" fill="#f6f6f6" stroke="#909090" />
                  <path d="M44 15.500h7M14 66.500h7M17.500 63v7" stroke="#2c50a8" />
                </TreeLines>
                <TreeItem $indent={67}>
                  <svg width="19" height="25" viewBox="0 0 19 25">
                    <path d="M1 3l7-2 9 2v18l-6 3-10-3z" fill="#1e90e0" stroke="#0f5fa0" />
                    <path d="M6 3l11 1v17l-11 1z" fill="#4cb8f8" />
                    <path d="M8 7h7M8 11h7" stroke="#dff2ff" strokeWidth="2" />
                    <circle cx="13" cy="17" r="1.500" fill="#ffe34a" />
                  </svg>
                  GMI-Live04
                </TreeItem>
                <TreeItem $indent={97}>
                  <svg width="20" height="25" viewBox="0 0 20 25">
                    <path d="M1 24v-7c0-4 4-5 8-5s10 1 10 6v6z" fill="#e2b227" stroke="#8a6508" />
                    <circle cx="10" cy="7" r="6" fill="#f0c842" stroke="#8a6508" />
                    <path d="M6 14l8 9" stroke="#fff3c4" strokeWidth="3" />
                  </svg>
                  320812: Dian Zhang
                </TreeItem>
                <TreeFolder $indent={34}>
                  <svg width="22" height="24" viewBox="0 0 22 24">
                    <rect x="1" y="1" width="20" height="22" rx="3" fill="#f6cf4c" stroke="#a87b14" />
                    <path d="M14 6c-3-1-4 1-4 4l-1 7c0 2-1 3-3 2M7 11h7" stroke="#7a5200" strokeWidth="1.800" fill="none" />
                  </svg>
                  技术指标
                </TreeFolder>
              </Tree>
              <ScrollBar $w={26}>
                <ScrollStep type="button" aria-label="向上"><Chevron /></ScrollStep>
                <Spacer />
                <ScrollStep type="button" aria-label="向下"><Chevron down /></ScrollStep>
              </ScrollBar>
            </PanelBody>
            <Tabs>
              <Tab type="button" $active>常用</Tab>
              <Tab type="button">收藏夹</Tab>
            </Tabs>
          </Panel>
        </Dock>
        <Chart>
          <Plot>
            <CandleChart />
            <Symbol>
              <svg width="11" height="6" viewBox="0 0 11 6"><path d="M0 0h11L5.500 6z" fill="#fff" /></svg>
              XAUUSD,M15
            </Symbol>
            <Comment>
              <svg width="16" height="12"><rect width="16" height="12" fill="#26303a" /><path d="M2 4.500h10M7 0v10" stroke="#ffff00" strokeWidth="1.300" /></svg>
              <span>MTDriver统计 ,V3.10 (http://mtdriver.cn)</span>
            </Comment>
          </Plot>
          <PriceScale>
            {PRICES.map((p) => <Price key={p}>{p}</Price>)}
            <PriceTag>2033.61</PriceTag>
          </PriceScale>
          <TimeScale>
            {TIMES.map((t) => <Time key={t}>{t}</Time>)}
          </TimeScale>
        </Chart>
      </Main>

      <Terminal>
        <TerminalRail>
          <RailClose type="button" aria-label="关闭终端"><CloseMark /></RailClose>
          <RailTitle>终端</RailTitle>
        </TerminalRail>
        <TerminalBody>
          <History>
            <HistoryMain>
              <HistoryTable>
                <colgroup>{HISTORY_COLS.map((w, i) => <col key={i} style={{ width: w }} />)}</colgroup>
                <thead>
                  <tr>
                    {['订单', '时间', '类型', '手数', '交易品种', '价格', '止损', '止盈', '时间', '价格', '库存费', '获利'].map((h, i) => (
                      <Th key={i} $left={i === 0}>
                        {i === 0 ? (
                          <Label $gap={12}>{h}<svg width="5" height="9"><path d="M.5 9l3-8" stroke="#777" /></svg></Label>
                        ) : h}
                      </Th>
                    ))}
                  </tr>
                </thead>
                <tbody>
                  {ORDERS.map((o) => (
                    <OrderRow key={o[0]}>
                      <Td $left><Label $gap={6}><DocIcon kind={o[2]} />{o[0]}</Label></Td>
                      {o.slice(1).map((c, i) => (
                        <Td key={i} colSpan={o[2] === 'balance' && i === 2 ? 8 : 1}>{c}</Td>
                      ))}
                    </OrderRow>
                  ))}
                </tbody>
              </HistoryTable>
              <Summary>
                <svg width="13" height="13" viewBox="0 0 13 13">
                  <circle cx="6.500" cy="6.500" r="5" fill="none" stroke="#777" strokeWidth="1.500" />
                  <path d="M3 10l7-7" stroke="#777" strokeWidth="1.500" />
                </svg>
                <span>{'盈/亏: -4 941.27  信用额: 0.00  存款: 1 884.63  取款: 0.00'}</span>
                <Spacer />
                <span>-3 056.64</span>
              </Summary>
            </HistoryMain>
            <ScrollBar $w={26}>
              <ScrollStep type="button" aria-label="向上"><Chevron /></ScrollStep>
              <Spacer />
              <Thumb $h={74} />
              <ScrollStep type="button" aria-label="向下"><Chevron down /></ScrollStep>
            </ScrollBar>
          </History>
          <Tabs>
            <Tab type="button">交易</Tab>
            <Tab type="button" $bare>展示</Tab>
            <Tab type="button" $active>账户历史</Tab>
            <Tab type="button">新闻<TabCount>34</TabCount></Tab>
            <Tab type="button">警报</Tab>
            <Tab type="button">邮箱<TabCount>44</TabCount></Tab>
            <Tab type="button">市场</Tab>
            <Tab type="button">信号</Tab>
            <Tab type="button">文章<TabCount>2</TabCount></Tab>
            <Tab type="button">代码库</Tab>
            <Tab type="button">EA</Tab>
            <Tab type="button">日志</Tab>
          </Tabs>
        </TerminalBody>
      </Terminal>
      <BottomEdge />

      <Watermarks aria-hidden="true">
        <defs>
          <path
            id="shield"
            fillRule="evenodd"
            d="M0 40Q47 38 63.500 0Q100 22.500 138.500 3C153 31 156 55 155.300 70C154 110 132 143 107.500 163.700C42 160 1 100 0 40zM62.700 45.400L87.700 38.900 94.700 65 121.700 58.500 128.300 84 102 90.900 108.700 117.800 83.300 124.700 76.300 98.100 49.300 105 42.700 79.200 69.300 72.300z"
          />
        </defs>
        <g fill="rgb(176,176,176)" fillOpacity=".41">
          {SHIELDS.map(([x, y]) => <use key={`${x},${y}`} href="#shield" x={x} y={y - 10} />)}
        </g>
      </Watermarks>
    </App_>
  );
}
